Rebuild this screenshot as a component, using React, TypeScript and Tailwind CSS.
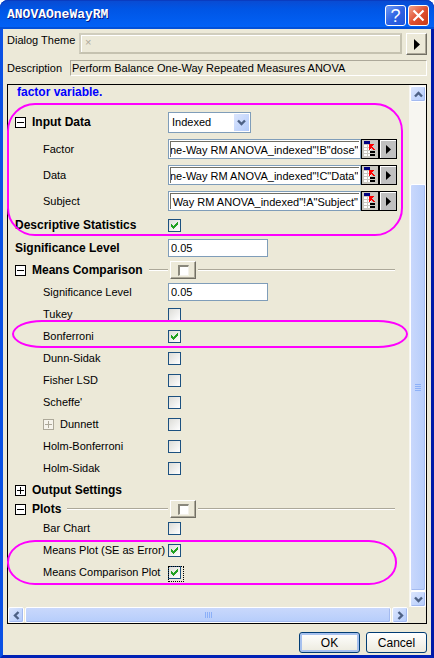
import { useEffect, useRef, useState, type ReactNode } from "react";

function Chevron({ dir }: { dir: "up" | "down" | "left" | "right" }) {
  const d = {
    up: "M1 6.5 4.5 3 8 6.5",
    down: "M1 2.5 4.5 6 8 2.5",
    left: "M6.5 1 3 4.5 6.5 8",
    right: "M2.5 1 6 4.5 2.5 8",
  }[dir];
  return (
    <svg width="9" height="9" viewBox="0 0 9 9" fill="none" stroke="#4d6185" strokeWidth="2.4" aria-hidden="true">
      <path d={d} />
    </svg>
  );
}

function ScrollButton({ dir }: { dir: "up" | "down" | "left" | "right" }) {
  return (
    <button
      type="button"
      aria-label={`Scroll ${dir}`}
      className="flex size-4 shrink-0 items-center justify-center rounded-xs border border-white bg-linear-to-br from-[#dce6fd] to-[#b3cbfb] shadow-[inset_-1px_-1px_0_#a3baf0]"
    >
      <Chevron dir={dir} />
    </button>
  );
}

function Expander({ open, faded, name }: { open?: boolean; faded?: boolean; name: string }) {
  return (
    <button type="button" aria-label={name} aria-expanded={!!open} className="block size-[11px] shrink-0">
      <svg
        width="11"
        height="11"
        viewBox="0 0 11 11"
        fill="none"
        stroke={faded ? "#aca899" : "#000"}
        shapeRendering="crispEdges"
        aria-hidden="true"
      >
        <rect x="0.5" y="0.5" width="10" height="10" fill={faded ? "#f6f4ec" : "#fff"} />
        <path d={open ? "M2 5.5H9" : "M2 5.5H9M5.5 2V9"} />
      </svg>
    </button>
  );
}

function Check({ id, on, focused }: { id: string; on?: boolean; focused?: boolean }) {
  const [checked, setChecked] = useState(!!on);
  return (
    <span
      className={
        focused
          ? "relative -mb-[3px] block size-4 outline-1 -outline-offset-1 outline-dotted outline-black"
          : "relative block size-[13px]"
      }
    >
      <input
        id={id}
        type="checkbox"
        checked={checked}
        onChange={(e) => setChecked(e.target.checked)}
        className="block size-[13px] appearance-none border border-[#1c5180] bg-linear-to-br from-[#dcdcd7] to-white outline-none"
      />
      {checked && (
        <svg
          className="pointer-events-none absolute top-0 left-0"
          width="13"
          height="13"
          viewBox="0 0 13 13"
          shapeRendering="crispEdges"
          aria-hidden="true"
        >
          <path
            d="M3 5h1v3H3zM4 6h1v3H4zM5 7h1v3H5zM6 6h1v3H6zM7 5h1v3H7zM8 4h1v3H8zM9 3h1v3H9z"
            fill="#21a121"
          />
        </svg>
      )}
    </span>
  );
}

type RowProps = {
  label: string;
  id?: string;
  h?: string;
  bold?: boolean;
  sub?: boolean;
  expander?: ReactNode;
  children?: ReactNode;
};

function Row({ label, id, h = "h-[22px]", bold, sub, expander, children }: RowProps) {
  return (
    <div className={`flex items-center ${h}`}>
      <div className={`flex w-40 shrink-0 items-center gap-1.5 whitespace-nowrap ${sub ? "pl-[35px]" : "pl-[7px]"}`}>
        {expander}
        <label htmlFor={id} className={bold ? "text-xs font-bold" : ""}>
          {label}
        </label>
      </div>
      {children}
    </div>
  );
}

function GroupRow({ label, id, h }: { label: string; id: string; h: string }) {
  return (
    <div className={`flex items-center pr-3.5 ${h}`}>
      <div className="flex w-40 shrink-0 items-center gap-1.5 pl-[7px] whitespace-nowrap">
        <Expander open name={label} />
        <label htmlFor={id} className="text-xs font-bold">
          {label}
        </label>
        <span className="h-0.5 flex-1 border-t border-b border-t-[#aca899] border-b-white" />
      </div>
      <span className="mx-0.5 flex h-[18px] w-[26px] shrink-0 items-center justify-center border border-t-white border-r-[#716f64] border-b-[#716f64] border-l-white shadow-[inset_-1px_-1px_0_#aca899]">
        <input
          id={id}
          type="checkbox"
          className="block size-[11px] appearance-none border-t-2 border-r border-b border-l-2 border-t-[#8a887c] border-r-[#f4f2ea] border-b-[#f4f2ea] border-l-[#8a887c] bg-white"
        />
      </span>
      <span className="h-0.5 flex-1 border-t border-b border-t-[#aca899] border-b-white" />
    </div>
  );
}

function RangeRow({ label, value }: { label: string; value: string }) {
  const ref = useRef<HTMLInputElement>(null);
  useEffect(() => {
    if (ref.current) ref.current.scrollLeft = ref.current.scrollWidth;
  }, []);
  const id = label.toLowerCase();
  return (
    <Row label={label} id={id} h="h-[26px]" sub>
      <div className="mr-3 flex h-5 min-w-0 flex-1">
        <div className="min-w-0 flex-1 border border-[#7f9db9] bg-white p-px">
          <input
            id={id}
            ref={ref}
            defaultValue={value}
            className="block h-full w-full border-t border-l border-[#716f64] pr-px text-right outline-none"
          />
        </div>
        <button
          type="button"
          aria-label={`Select ${label}`}
          className="flex w-[18px] items-center justify-center border border-black bg-[#c9c7c0]"
        >
          <svg width="14" height="16" viewBox="0 0 14 16" shapeRendering="crispEdges" aria-hidden="true">
            <path fill="#fff" d="M1 4h3v2H1zM5 4h3v2H5zM1 7h3v2H1zM5 7h3v2H5zM1 10h3v2H1zM5 10h2v2H5zM1 13h3v2H1zM5 13h2v2H5z" />
            <path fill="#000080" d="M1 0h6v3H1z" />
            <path fill="#000" d="M7 10h5v2H7zM7 13h5v2H7z" />
            <path fill="#f00" d="M6 3h5v1h-1v1h-1v1h1v1h1v1h1v1h-2V8H9V7H8v1H7v1H6z" />
          </svg>
        </button>
        <button
          type="button"
          aria-label={`${label} options`}
          className="flex w-[18px] items-center justify-center border border-black bg-[#c0c0c0] shadow-[inset_1px_1px_0_#fff]"
        >
          <svg width="5" height="9" viewBox="0 0 5 9" aria-hidden="true">
            <path d="M0 0 5 4.500 0 9Z" />
          </svg>
        </button>
      </div>
    </Row>
  );
}

function NumberBox({ id }: { id: string }) {
  return <input id={id} defaultValue="0.05" className="h-[18px] w-[100px] border border-[#7f9db9] bg-white px-0.5 outline-none" />;
}

export default function App() {
  return (
    <div className="flex min-h-screen flex-col rounded-t-lg border-t-0 border-r-[3px] border-b-[3px] border-l-[3px] border-r-[#0019a8] border-b-[#0021b5] border-l-[#0a50e4] bg-[#ece9d8] font-['Liberation_Sans',Arial,sans-serif] text-[11px] leading-[14px] text-black">
      <header className="-mx-[3px] flex h-[29px] items-center justify-between rounded-t-lg bg-linear-to-b from-[#0a4ad0] via-[#0055e5] via-30% to-[#0263f8] pr-[5px] pl-[7px] shadow-[inset_0_1px_0_#0a3cc0,inset_0_-2px_0_#0250d8]">
        <h1 className="font-['Liberation_Mono',monospace] text-[13px] font-bold text-white [text-shadow:1px_1px_0_#0a1883]">
          ANOVAOneWayRM
        </h1>
        <div className="flex gap-0.5 pt-0.5">
          <button
            type="button"
            aria-label="Help"
            className="flex size-[21px] items-center justify-center rounded-[3px] border border-white bg-linear-to-br from-[#6f98f3] via-[#2f63e3] to-[#1f54d8] text-lg leading-4 text-white"
          >
            ?
          </button>
          <button
            type="button"
            aria-label="Close"
            className="flex size-[21px] items-center justify-center rounded-[3px] border border-white bg-linear-to-br from-[#f0a088] via-[#e05030] to-[#c83a14]"
          >
            <svg width="13" height="13" viewBox="0 0 13 13" stroke="#fff" strokeWidth="2.2" aria-hidden="true">
              <path d="M1.500 1.500 11.500 11.500M11.500 1.500 1.500 11.500" />
            </svg>
          </button>
        </div>
      </header>

      <main className="flex flex-1 flex-col pt-1 pr-1 pl-1">
        <div className="flex items-start">
          <label htmlFor="theme" className="w-[72px] shrink-0 whitespace-nowrap">
            Dialog Theme
          </label>
          <input
            id="theme"
            defaultValue="×"
            disabled
            className="h-[21px] min-w-0 flex-1 border-2 border-[#d0cdbd] border-r-[#c5c2b0] border-b-[#c5c2b0] px-1 pb-1 text-[#aca899] shadow-[inset_1px_1px_0_#fff]"
          />
          <button
            type="button"
            aria-label="Theme menu"
            className="ml-1 flex h-[22px] w-[21px] shrink-0 items-center justify-center border border-t-white border-r-[#716f64] border-b-[#716f64] border-l-white shadow-[inset_-1px_-1px_0_#aca899]"
          >
            <svg width="6" height="11" viewBox="0 0 6 11" aria-hidden="true">
              <path d="M0 0 6 5.500 0 11Z" />
            </svg>
          </button>
        </div>
        <div className="mt-[5px] flex items-center">
          <label htmlFor="description" className="w-[63px] shrink-0">
            Description
          </label>
          <input
            id="description"
            readOnly
            value="Perform Balance One-Way Repeated Measures ANOVA"
            className="h-4 min-w-0 flex-1 border border-t-[#aca899] border-r-white border-b-white border-l-[#aca899] px-px outline-none"
          />
        </div>

        <section className="mt-2 flex flex-1 flex-col border border-black">
          <div className="flex flex-1">
            <div className="min-w-0 flex-1">
              <p className="pl-[9px] text-xs leading-[14px] font-bold text-[#0000ff]">factor variable.</p>

              <div className="relative mt-[9px]">
                <Row label="Input Data" id="input" h="h-7" bold expander={<Expander open name="Input Data" />}>
                  <div className="relative">
                    <select
                      id="input"
                      defaultValue="Indexed"
                      className="block h-[21px] w-[83px] appearance-none border border-[#7f9db9] bg-white px-[3px] outline-none"
                    >
                      <option>Indexed</option>
                      <option>Raw</option>
                    </select>
                    <span className="pointer-events-none absolute top-0.5 right-0.5 flex h-[17px] w-[15px] items-center justify-center bg-linear-to-br from-[#dce6fd] to-[#b3cbfb]">
                      <Chevron dir="down" />
                    </span>
                  </div>
                </Row>
                <RangeRow label="Factor" value={'ne-Way RM ANOVA_indexed"!B"dose"'} />
                <RangeRow label="Data" value={'ne-Way RM ANOVA_indexed"!C"Data"'} />
                <RangeRow label="Subject" value={'Way RM ANOVA_indexed"!A"Subject"'} />
                <Row label="Descriptive Statistics" id="stats" bold>
                  <Check id="stats" on />
                </Row>
                <div className="pointer-events-none absolute -top-[5px] right-[6px] bottom-0 -left-px rounded-[28px] border-2 border-[#ff00ff]" />
              </div>

              <Row label="Significance Level" id="level" h="h-6" bold>
                <NumberBox id="level" />
              </Row>
              <GroupRow label="Means Comparison" id="means" h="h-5" />
              <Row label="Significance Level" id="means-level" h="h-[23px]" sub>
                <NumberBox id="means-level" />
              </Row>
              <Row label="Tukey" id="tukey" sub>
                <Check id="tukey" />
              </Row>
              <div className="relative">
                <Row label="Bonferroni" id="bonferroni" sub>
                  <Check id="bonferroni" on />
                </Row>
                <div className="pointer-events-none absolute -top-[5px] right-px -bottom-px left-1 rounded-[30px/14px] border-2 border-[#ff00ff]" />
              </div>
              <Row label="Dunn-Sidak" id="dunn" sub>
                <Check id="dunn" />
              </Row>
              <Row label="Fisher LSD" id="fisher" sub>
                <Check id="fisher" />
              </Row>
              <Row label="Scheffe'" id="scheffe" sub>
                <Check id="scheffe" />
              </Row>
              <Row label="Dunnett" id="dunnett" sub expander={<Expander faded name="Dunnett" />}>
                <Check id="dunnett" />
              </Row>
              <Row label="Holm-Bonferroni" id="holm-b" sub>
                <Check id="holm-b" />
              </Row>
              <Row label="Holm-Sidak" id="holm-s" sub>
                <Check id="holm-s" />
              </Row>
              <Row label="Output Settings" bold expander={<Expander name="Output Settings" />} />
              <GroupRow label="Plots" id="plots" h="h-4" />
              <Row label="Bar Chart" id="bar" sub>
                <Check id="bar" />
              </Row>
              <div className="relative">
                <Row label="Means Plot (SE as Error)" id="means-plot" sub>
                  <Check id="means-plot" on />
                </Row>
                <Row label="Means Comparison Plot" id="comparison-plot" sub>
                  <Check id="comparison-plot" on focused />
                </Row>
                <div className="pointer-events-none absolute top-px right-3 -bottom-0.5 -left-px rounded-[28px/22px] border-2 border-[#ff00ff]" />
              </div>
            </div>

            <div className="flex w-[17px] shrink-0 flex-col bg-[#f7f6f1] pt-px pl-px">
              <ScrollButton dir="up" />
              <div className="h-[82px]" />
              <div className="flex flex-1 flex-col items-center justify-center gap-px rounded-xs border border-white bg-linear-to-r from-[#c9d8fc] to-[#b6cdfb] shadow-[inset_-1px_-1px_0_#a3baf0]">
                {[0, 1, 2, 3].map((i) => (
                  <span key={i} className="h-px w-1.5 bg-[#8cb0f8]" />
                ))}
              </div>
              <ScrollButton dir="down" />
            </div>
          </div>
          <div className="flex h-4 pr-[18px]">
            <ScrollButton dir="left" />
            <div className="mx-px flex flex-1 items-center justify-center gap-px rounded-xs border border-white bg-linear-to-b from-[#c9d8fc] to-[#b6cdfb] shadow-[inset_-1px_-1px_0_#a3baf0]">
              {[0, 1, 2, 3].map((i) => (
                <span key={i} className="h-1.5 w-px bg-[#8cb0f8]" />
              ))}
            </div>
            <ScrollButton dir="right" />
          </div>
        </section>

        <footer className="flex justify-end gap-1.5 pt-2 pb-0.5 text-xs">
          <button
            type="button"
            className="h-[21px] w-[61px] rounded-[3px] border border-[#003c74] bg-linear-to-b from-white to-[#eceade] shadow-[inset_0_0_0_2px_#a6c0ee]"
          >
            OK
          </button>
          <button
            type="button"
            className="h-[21px] w-[61px] rounded-[3px] border border-[#003c74] bg-linear-to-b from-white to-[#eceade]"
          >
            Cancel
          </button>
        </footer>
      </main>
    </div>
  );
}
